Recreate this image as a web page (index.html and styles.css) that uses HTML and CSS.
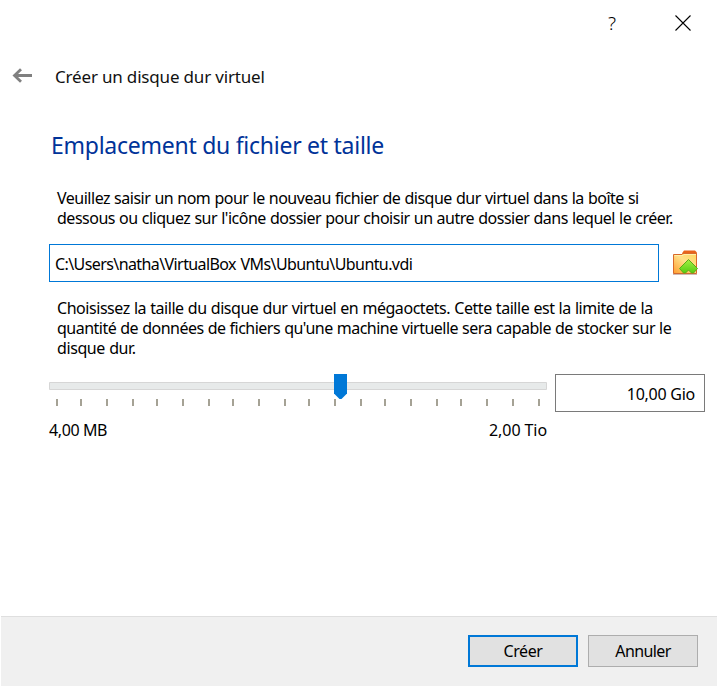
FILE: index.html
```
<!DOCTYPE html>
<html lang="fr">
<head>
<meta charset="utf-8">
<title>Créer un disque dur virtuel</title>
<link rel="stylesheet" href="styles.css">
</head>
<body>
<div class="dialog">
  <header class="titlebar">
    <span class="help">?</span>
    <svg class="close" width="16" height="16" viewBox="0 0 16 16"><path d="M.5.5l15 15M15.5.5l-15 15" fill="none" stroke="#000" stroke-width="1.1"/></svg>
  </header>
  <div class="nav">
    <svg width="20" height="16" viewBox="0 0 20 16"><path d="M9 1.200L2.500 7.500 9 13.800M2.500 7.500H20" fill="none" stroke="#808080" stroke-width="2.8"/></svg>
    <span class="title">Créer un disque dur virtuel</span>
  </div>
  <main class="content">
    <h1>Emplacement du fichier et taille</h1>
    <p class="intro"><span class="line l1">Veuillez saisir un nom pour le nouveau fichier de disque dur virtuel dans la boîte si</span><span class="line l2">dessous ou cliquez sur l'icône dossier pour choisir un autre dossier dans lequel le créer.</span></p>
    <div class="path-row">
      <div class="field path">C:\Users\natha\VirtualBox VMs\Ubuntu\Ubuntu.vdi</div>
      <svg width="26" height="26" viewBox="0 0 26 26">
        <defs>
          <linearGradient id="folder" x1="1" y1="0" x2="0" y2="1"><stop offset="0" stop-color="#ffd75e"/><stop offset=".45" stop-color="#ffe08a"/><stop offset="1" stop-color="#ff9d2e"/></linearGradient>
          <linearGradient id="arrow" x1="0" y1="0" x2="0" y2="1"><stop offset="0" stop-color="#a4f044"/><stop offset="1" stop-color="#55cc12"/></linearGradient>
        </defs>
        <path d="M9 5V3.200L11 .500h11l2 2v6H9z" fill="#e8641b"/>
        <path d="M.5 4.500h8.500l1-1h13.500v20H.5z" fill="url(#folder)" stroke="#d9692a"/>
        <path d="M1.500 5.500H10l1-1h12" fill="none" stroke="#fff0a8"/>
        <path d="M0 24.300h24" stroke="#9c7466" opacity=".6"/>
        <path d="M15.500 9.500l9 9-4 4.500h-2l-3-3-3 3h-2l-4-4.500z" fill="url(#arrow)" stroke="#5cab16" stroke-linejoin="round"/>
      </svg>
    </div>
    <p class="size-text"><span class="line l3">Choisissez la taille du disque dur virtuel en mégaoctets. Cette taille est la limite de la</span><span class="line l4">quantité de données de fichiers qu'une machine virtuelle sera capable de stocker sur le</span><span class="line l5">disque dur.</span></p>
    <div class="size-row">
      <div class="slider">
        <svg width="498" height="38" viewBox="0 0 498 38">
          <path d="M.5 8.500h497v7H.5z" fill="#e7eaea" stroke="#d6d6d6"/>
          <path d="M8 25v7M32 25v7M58 25v7M84 25v7M108 25v7M134 25v7M160 25v7M184 25v7M210 25v7M236 25v7M260 25v7M286 25v7M312 25v7M336 25v7M362 25v7M388 25v7M412 25v7M438 25v7M464 25v7M490 25v7" stroke="#a5a295" stroke-width="2"/>
          <path d="M285 0h13v19.500l-5.500 5.500h-2L285 19.500z" fill="#0078d7"/>
        </svg>
        <div class="range"><span class="min">4,00 MB</span><span class="max">2,00 Tio</span></div>
      </div>
      <div class="field size">10,00 Gio</div>
    </div>
  </main>
  <footer class="actions">
    <button class="primary">Créer</button>
    <button class="cancel">Annuler</button>
  </footer>
</div>
</body>
</html>
```
FILE: styles.css
```
* { box-sizing: border-box; }
body { margin: 0; background: #fff; color: #000; font: 16px/20px "Noto Sans", "Open Sans", sans-serif; }
.dialog { display: flex; flex-direction: column; width: 718px; height: 687px; padding: 0 1px 1px; overflow: hidden; }
.titlebar { display: flex; justify-content: flex-end; align-items: center; gap: 58px; height: 45px; padding-right: 26px; }
.help { width: 9px; font-size: 19px; font-weight: 300; }
.close { display: block; }
.nav { display: flex; align-items: center; gap: 23px; height: 62px; padding: 1px 0 0 11px; }
.nav svg { display: block; margin-bottom: 2px; }
.title { font-size: 17px; letter-spacing: -.18px; white-space: nowrap; color: #111; }
.content { flex: 1; padding: 22px 12px 0 48px; }
h1 { margin: 0 0 0 2px; color: #003399; font-size: 23px; line-height: 32px; font-weight: 400; letter-spacing: -.26px; white-space: nowrap; }
p { margin: 0; padding-left: 8px; }
.intro { margin-top: 27px; }
.line { display: block; white-space: nowrap; word-spacing: .4px; }
.l1 { letter-spacing: -.49px; }
.l2 { letter-spacing: -.49px; }
.l3 { letter-spacing: -.45px; }
.l4 { letter-spacing: -.51px; }
.l5 { letter-spacing: -.4px; }
.path-row { display: flex; align-items: center; gap: 14px; margin-top: 16px; }
.field { display: flex; align-items: center; height: 38px; border: 1px solid #7a7a7a; white-space: nowrap; }
.path { width: 610px; padding: 2px 0 0 5px; border-color: #0078d7; letter-spacing: -.59px; word-spacing: 1px; }
.size-text { margin-top: 16px; }
.size-row { display: flex; gap: 8px; margin-top: 16px; }
.slider { width: 498px; }
.slider svg { display: block; }
.range { display: flex; justify-content: space-between; margin-top: 8px; }
.min { letter-spacing: -.4px; }
.max { letter-spacing: -.08px; }
.size { width: 150px; justify-content: flex-end; padding: 2px 9px 0 0; letter-spacing: -.26px; }
.actions { display: flex; justify-content: flex-end; gap: 10px; height: 70px; padding: 18px 19px 0 0; border-top: 1px solid #dfdfdf; background: #f0f0f0; }
button { width: 110px; height: 32px; padding: 0; border: 1px solid #adadad; background: #e1e1e1; color: #000; font: inherit; letter-spacing: -.6px; }
.primary { border: 2px solid #0078d7; letter-spacing: -.4px; }
```
